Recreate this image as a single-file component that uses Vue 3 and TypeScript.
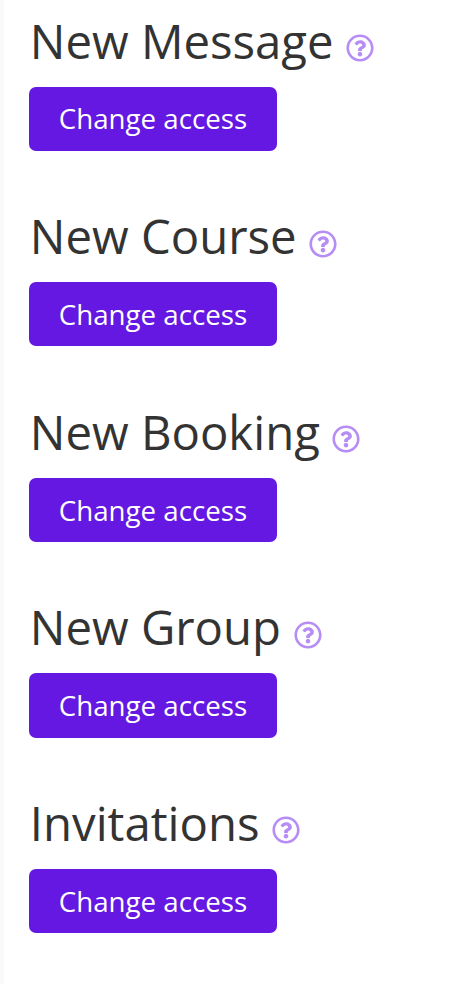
<script setup lang="ts">
interface Section {
  title: string
}

const sections: Section[] = [
  { title: 'New Message' },
  { title: 'New Course' },
  { title: 'New Booking' },
  { title: 'New Group' },
  { title: 'Invitations' },
]
</script>

<template>
  <main class="panel">
    <section v-for="section in sections" :key="section.title" class="section">
      <h2 class="title">
        <span class="label">{{ section.title }}</span>
        <svg class="help" viewBox="0 0 512 512" role="img" aria-label="Help">
          <path d="M256 8C119 8 8 119.100 8 256c0 137 111 248 248 248s248-111 248-248C504 119.100 393 8 256 8zm0 448c-110.500 0-200-89.400-200-200 0-110.500 89.500-200 200-200 110.500 0 200 89.500 200 200 0 110.500-89.400 200-200 200zm107.200-255.200c0 67.100-72.400 68.100-72.400 92.900V300c0 6.600-5.400 12-12 12h-45.600c-6.600 0-12-5.400-12-12v-8.700c0-35.700 27.100-50 47.600-61.500 17.600-9.800 28.300-16.500 28.300-29.600 0-17.200-22-28.700-39.800-28.700-23.200 0-33.900 11-49 30-4.100 5.100-11.500 6.100-16.700 2.100l-27.800-21.100c-5.100-3.900-6.300-11.100-2.600-16.400C184.800 131.500 214.900 112 261.800 112c49.100 0 101.500 38.300 101.500 88.800zM298 368c0 23.200-18.800 42-42 42s-42-18.800-42-42 18.800-42 42-42 42 18.800 42 42z" />
        </svg>
      </h2>
      <button class="access" type="button">Change access</button>
    </section>
  </main>
</template>

<style>
body {
  margin: 0;
  background: #fff;
}
</style>

<style scoped>
.panel {
  box-sizing: border-box;
  height: 984px;
  overflow: hidden;
  padding: 9.6px 0 0 25px;
  border-left: 4px solid #fafafa;
  font-family: 'Open Sans', sans-serif;
}
.section {
  height: 195.6px;
}
.title {
  display: flex;
  align-items: center;
  height: 63px;
  margin: 0 0 14px;
  padding-left: 0.8px;
  color: #333;
  font-size: 47.3px;
  font-weight: 400;
  line-height: 63px;
  white-space: nowrap;
}
.label {
  margin-bottom: 2px;
}
.help {
  width: 28px;
  height: 28px;
  margin: 14px 0 0 12.6px;
  fill: #b68cf5;
}
.access {
  display: block;
  box-sizing: border-box;
  width: 248px;
  height: 64.2px;
  padding: 0.4px 0 0;
  border: 0;
  border-radius: 7px;
  background: #6418e2;
  color: #fff;
  font: 400 27.7px/63px 'Open Sans', sans-serif;
}
</style>
